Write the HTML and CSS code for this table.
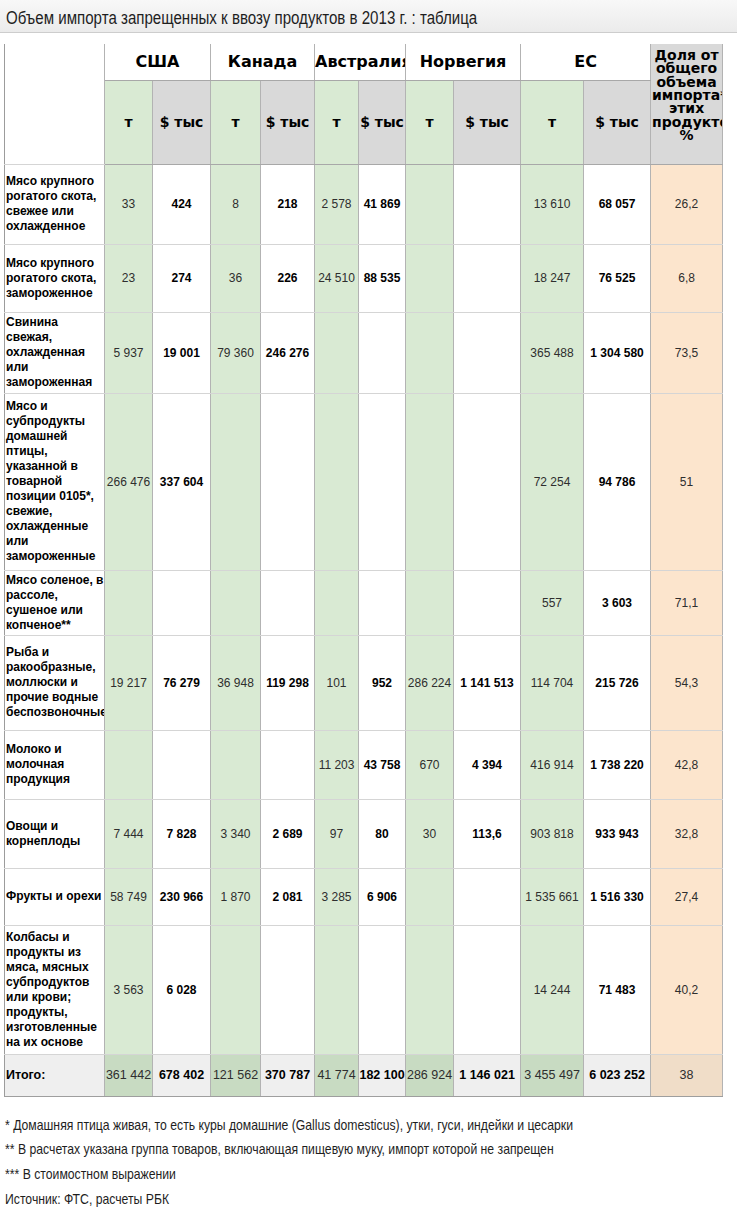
FILE: index.html
```html
<!DOCTYPE html>
<html lang="ru">
<head>
<meta charset="utf-8">
<title>Объем импорта</title>
<link rel="stylesheet" href="styles.css">
</head>
<body>
<div class="titlebar"><span class="narrow title-text">Объем импорта запрещенных к ввозу продуктов в 2013 г. : таблица</span></div>
<div class="wrap">
<table class="data">
<colgroup>
<col class="c-label"><col class="c48"><col class="c58"><col class="c50"><col class="c54"><col class="c44"><col class="c47"><col class="c48"><col class="c67"><col class="c63"><col class="c67"><col class="c72">
</colgroup>
<thead>
<tr class="h1">
<th class="corner" rowspan="2"></th>
<th class="country" colspan="2">США</th>
<th class="country" colspan="2">Канада</th>
<th class="country" colspan="2">Австралия</th>
<th class="country" colspan="2">Норвегия</th>
<th class="country" colspan="2">ЕС</th>
<th class="share-h" rowspan="2">Доля от общего объема импорта*** этих продуктов, %</th>
</tr>
<tr class="h2">
<th class="ht">т</th><th class="hd">$ тыс</th>
<th class="ht">т</th><th class="hd">$ тыс</th>
<th class="ht">т</th><th class="hd">$ тыс</th>
<th class="ht">т</th><th class="hd">$ тыс</th>
<th class="ht">т</th><th class="hd">$ тыс</th>
</tr>
</thead>
<tbody>
<tr class="r1">
<td class="label">Мясо крупного рогатого скота, свежее или охлажденное</td>
<td class="t">33</td><td class="d">424</td>
<td class="t">8</td><td class="d">218</td>
<td class="t">2 578</td><td class="d">41 869</td>
<td class="t"></td><td class="d"></td>
<td class="t">13 610</td><td class="d">68 057</td>
<td class="s">26,2</td>
</tr>
<tr class="r2">
<td class="label">Мясо крупного рогатого скота, замороженное</td>
<td class="t">23</td><td class="d">274</td>
<td class="t">36</td><td class="d">226</td>
<td class="t">24 510</td><td class="d">88 535</td>
<td class="t"></td><td class="d"></td>
<td class="t">18 247</td><td class="d">76 525</td>
<td class="s">6,8</td>
</tr>
<tr class="r3">
<td class="label">Свинина свежая, охлажденная или замороженная</td>
<td class="t">5 937</td><td class="d">19 001</td>
<td class="t">79 360</td><td class="d">246 276</td>
<td class="t"></td><td class="d"></td>
<td class="t"></td><td class="d"></td>
<td class="t">365 488</td><td class="d">1 304 580</td>
<td class="s">73,5</td>
</tr>
<tr class="r4">
<td class="label">Мясо и субпродукты домашней птицы, указанной в товарной позиции 0105*, свежие, охлажденные или замороженные</td>
<td class="t">266 476</td><td class="d">337 604</td>
<td class="t"></td><td class="d"></td>
<td class="t"></td><td class="d"></td>
<td class="t"></td><td class="d"></td>
<td class="t">72 254</td><td class="d">94 786</td>
<td class="s">51</td>
</tr>
<tr class="r5">
<td class="label">Мясо соленое, в рассоле, сушеное или копченое**</td>
<td class="t"></td><td class="d"></td>
<td class="t"></td><td class="d"></td>
<td class="t"></td><td class="d"></td>
<td class="t"></td><td class="d"></td>
<td class="t">557</td><td class="d">3 603</td>
<td class="s">71,1</td>
</tr>
<tr class="r6">
<td class="label">Рыба и ракообразные, моллюски и прочие водные беспозвоночные</td>
<td class="t">19 217</td><td class="d">76 279</td>
<td class="t">36 948</td><td class="d">119 298</td>
<td class="t">101</td><td class="d">952</td>
<td class="t">286 224</td><td class="d">1 141 513</td>
<td class="t">114 704</td><td class="d">215 726</td>
<td class="s">54,3</td>
</tr>
<tr class="r7">
<td class="label">Молоко и молочная продукция</td>
<td class="t"></td><td class="d"></td>
<td class="t"></td><td class="d"></td>
<td class="t">11 203</td><td class="d">43 758</td>
<td class="t">670</td><td class="d">4 394</td>
<td class="t">416 914</td><td class="d">1 738 220</td>
<td class="s">42,8</td>
</tr>
<tr class="r8">
<td class="label">Овощи и корнеплоды</td>
<td class="t">7 444</td><td class="d">7 828</td>
<td class="t">3 340</td><td class="d">2 689</td>
<td class="t">97</td><td class="d">80</td>
<td class="t">30</td><td class="d">113,6</td>
<td class="t">903 818</td><td class="d">933 943</td>
<td class="s">32,8</td>
</tr>
<tr class="r9">
<td class="label nowrap">Фрукты и орехи</td>
<td class="t">58 749</td><td class="d">230 966</td>
<td class="t">1 870</td><td class="d">2 081</td>
<td class="t">3 285</td><td class="d">6 906</td>
<td class="t"></td><td class="d"></td>
<td class="t">1 535 661</td><td class="d">1 516 330</td>
<td class="s">27,4</td>
</tr>
<tr class="r10">
<td class="label">Колбасы и продукты из мяса, мясных субпродуктов или крови; продукты, изготовленные на их основе</td>
<td class="t">3 563</td><td class="d">6 028</td>
<td class="t"></td><td class="d"></td>
<td class="t"></td><td class="d"></td>
<td class="t"></td><td class="d"></td>
<td class="t">14 244</td><td class="d">71 483</td>
<td class="s">40,2</td>
</tr>
<tr class="total">
<td class="label">Итого:</td>
<td class="t">361 442</td><td class="d">678 402</td>
<td class="t">121 562</td><td class="d">370 787</td>
<td class="t">41 774</td><td class="d">182 100</td>
<td class="t">286 924</td><td class="d">1 146 021</td>
<td class="t">3 455 497</td><td class="d">6 023 252</td>
<td class="s">38</td>
</tr>
</tbody>
</table>
<div class="notes">
<p><span class="narrow note-text">* Домашняя птица живая, то есть куры домашние (Gallus domesticus), утки, гуси, индейки и цесарки</span></p>
<p><span class="narrow note-text">** В расчетах указана группа товаров, включающая пищевую муку, импорт которой не запрещен</span></p>
<p><span class="narrow note-text">*** В стоимостном выражении</span></p>
<p><span class="narrow note-text">Источник: ФТС, расчеты РБК</span></p>
</div>
</div>
</body>
</html>
```
FILE: styles.css
```css
html, body {
  margin: 0;
  padding: 0;
  background: #ffffff;
}

.narrow {
  display: inline-block;
  transform-origin: 0 50%;
  white-space: nowrap;
}

.title-text { transform: scaleX(0.862); }
.note-text { transform: scaleX(0.843); }

.titlebar {
  height: 32px;
  border-bottom: 1px solid #cdcdcd;
  background: linear-gradient(#f8f8f8, #ebebeb);
  padding-left: 6px;
  font-family: "Liberation Sans", Arial, sans-serif;
  font-size: 17.5px;
  line-height: 36px;
  color: #1e1e1e;
  white-space: nowrap;
  overflow: hidden;
}

.wrap {
  padding: 11px 0 0 4px;
}

.data {
  border-collapse: collapse;
  table-layout: fixed;
  width: 719px;
  font-family: "Liberation Sans", Arial, sans-serif;
  font-size: 12px;
  color: #000;
}

.c-label { width: 100px; }
.c44 { width: 44px; }
.c47 { width: 47px; }
.c48 { width: 48px; }
.c50 { width: 50px; }
.c54 { width: 54px; }
.c58 { width: 58px; }
.c63 { width: 63px; }
.c67 { width: 67px; }
.c72 { width: 72px; }

.data th,
.data td {
  padding: 0;
  overflow: hidden;
  vertical-align: middle;
  text-align: center;
  border-left: 1px solid #b3b3b3;
  border-right: 1px solid #b3b3b3;
  border-top: 1px solid #d5d5d5;
  border-bottom: 1px solid #d5d5d5;
}

.h1 { height: 36px; }
.h2 { height: 84px; }

.data th {
  font-family: "DejaVu Sans", sans-serif;
  font-weight: bold;
}

.data .corner {
  border-top: none;
  border-left: 1px solid #9c9c9c;
  background: #fff;
}

.data .country {
  font-size: 16px;
  border-top: none;
  background: #fff;
  white-space: nowrap;
  border-bottom-color: #a8a8a8;
}

.data .ht,
.data .hd {
  font-size: 14px;
  white-space: nowrap;
  border-bottom-color: #a8a8a8;
}

.data .ht { background: #d9ead3; }
.data .hd { background: #d9d9d9; }

.data .share-h {
  background: #d9d9d9;
  font-size: 14px;
  line-height: 13.4px;
  padding: 0 1px 16px 1px;
  border-top: none;
  border-bottom-color: #a8a8a8;
}

.data .label {
  text-align: left;
  font-weight: bold;
  line-height: 15px;
  padding-left: 1px;
  background: #fff;
  border-left-color: #9c9c9c;
}

.data .nowrap { white-space: nowrap; }

.data .t {
  background: #d9ead3;
  color: #2e2e2e;
  white-space: nowrap;
}

.data .d {
  background: #fff;
  font-weight: bold;
  white-space: nowrap;
}

.data .s {
  background: #fce5cd;
  color: #2e2e2e;
}

.r1 { height: 80px; }
.r2 { height: 68px; }
.r3 { height: 81px; }
.r4 { height: 177px; }
.r5 { height: 65px; }
.r6 { height: 95px; }
.r7 { height: 69px; }
.r8 { height: 69px; }
.r9 { height: 57px; }
.r10 { height: 129px; }

.total { height: 42px; }

.data .total td {
  border-top-color: #9e9e9e;
  border-bottom-color: #9e9e9e;
  font-size: 12.5px;
}

.data .total .label { background: #efefef; }
.data .total .t { background: #c8dbc2; }
.data .total .d { background: #efefef; }
.data .total .s { background: #f0ddc8; }

.notes {
  padding: 16px 0 0 1px;
  font-family: "Liberation Sans", Arial, sans-serif;
  font-size: 14.5px;
  line-height: 24.8px;
  color: #1e1e1e;
}

.notes p {
  margin: 0;
  white-space: nowrap;
}
```
